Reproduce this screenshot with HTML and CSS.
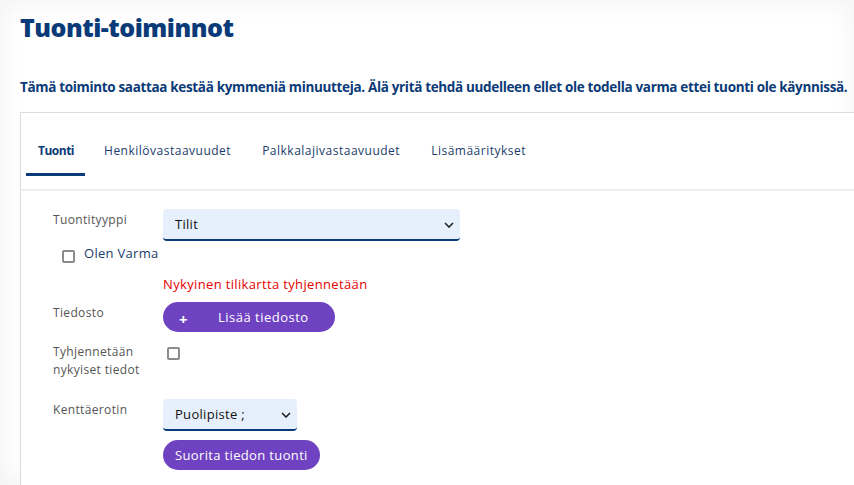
FILE: index.html
```html
<!DOCTYPE html>
<html lang="fi">
<head>
<meta charset="utf-8">
<title>Tuonti-toiminnot</title>
<link rel="stylesheet" href="styles.css">
</head>
<body>
<div class="page">
  <h1 class="title">Tuonti-toiminnot</h1>
  <p class="notice">Tämä toiminto saattaa kestää kymmeniä minuutteja. Älä yritä tehdä uudelleen ellet ole todella varma ettei tuonti ole käynnissä.</p>
  <div class="card">
    <nav class="tabs">
      <span class="tab active">Tuonti</span>
      <span class="tab">Henkilövastaavuudet</span>
      <span class="tab">Palkkalajivastaavuudet</span>
      <span class="tab">Lisämääritykset</span>
    </nav>
    <div class="form">
      <div class="row row-type">
        <label class="label">Tuontityyppi</label>
        <div class="select-wrap wide">
          <select class="select"><option>Tilit</option></select>
          <svg class="chev" width="10" height="6" viewBox="0 0 10 6"><path d="M1 1l4 4 4-4" fill="none" stroke="#222" stroke-width="1.6"/></svg>
        </div>
      </div>
      <div class="check-row">
        <span class="box"></span>
        <span class="check-text">Olen Varma</span>
      </div>
      <div class="row row-warn">
        <span></span>
        <span class="danger">Nykyinen tilikartta tyhjennetään</span>
      </div>
      <div class="row row-file">
        <label class="label">Tiedosto</label>
        <div><button class="btn btn-file"><span class="plus">+</span><span class="btn-text">Lisää tiedosto</span></button></div>
      </div>
      <div class="row row-clear">
        <label class="label two">Tyhjennetään<br>nykyiset tiedot</label>
        <div><span class="box box-inline"></span></div>
      </div>
      <div class="row row-sep">
        <label class="label">Kenttäerotin</label>
        <div class="select-wrap narrow">
          <select class="select"><option>Puolipiste ;</option></select>
          <svg class="chev" width="10" height="6" viewBox="0 0 10 6"><path d="M1 1l4 4 4-4" fill="none" stroke="#222" stroke-width="1.6"/></svg>
        </div>
      </div>
      <div class="row row-run">
        <span></span>
        <div><button class="btn btn-run">Suorita tiedon tuonti</button></div>
      </div>
    </div>
  </div>
</div>
</body>
</html>
```
FILE: styles.css
```css
html, body {
  margin: 0;
  height: 100%;
  overflow: hidden;
}
body {
  background: #fff;
  font-family: "Open Sans", "Noto Sans", sans-serif;
}
.page {
  height: 485px;
  overflow: hidden;
  box-sizing: border-box;
  padding: 9px 0 0 20px;
  box-shadow: inset 0 0 28px rgba(0, 0, 0, 0.06);
}
.title {
  margin: 0;
  font-size: 25px;
  line-height: 36px;
  font-weight: 800;
  letter-spacing: -0.5px;
  color: #0a3a78;
}
.notice {
  margin: 32px 0 0;
  font-size: 13.5px;
  line-height: 20px;
  font-weight: 700;
  letter-spacing: -0.34px;
  color: #0a3a78;
  white-space: nowrap;
}
.card {
  margin-top: 15px;
  border: 1px solid #dcdcdc;
  border-right: none;
  background: #fff;
  min-height: 400px;
}
.tabs {
  display: flex;
  padding: 29px 0 0 5px;
  border-bottom: 2px solid #eeeeee;
}
.tab {
  padding: 0 12px 13px;
  margin-right: 7px;
  font-size: 12px;
  line-height: 18px;
  letter-spacing: 0.5px;
  color: #1b3c6c;
  border-bottom: 3px solid transparent;
  margin-bottom: 13px;
}
.tab.active {
  padding: 0 11px 13px 12px;
  font-weight: 700;
  letter-spacing: -0.5px;
  color: #0a3a78;
  border-bottom-color: #0a3a78;
}
.form {
  padding: 18px 32px;
}
.row {
  display: grid;
  grid-template-columns: 110px auto;
  align-items: start;
}
.label {
  font-size: 12px;
  line-height: 18px;
  letter-spacing: 0.35px;
  color: #555;
  padding-top: 2px;
}
.label.two {
  padding-top: 0;
}
.select-wrap {
  position: relative;
}
.select-wrap.wide { width: 297px; }
.select-wrap.narrow { width: 134px; }
.select {
  -webkit-appearance: none;
  appearance: none;
  width: 100%;
  height: 32px;
  box-sizing: border-box;
  border: none;
  border-bottom: 2px solid #0a3a78;
  border-radius: 4px;
  background: #e6f0fc;
  padding: 0 12px;
  font-family: "Open Sans", sans-serif;
  font-size: 13px;
  letter-spacing: 0.3px;
  color: #111;
}
.chev {
  position: absolute;
  right: 6px;
  top: 13px;
}
.check-row {
  display: flex;
  align-items: flex-start;
  padding-left: 9px;
  margin-top: 3px;
  height: 28px;
}
.box {
  display: inline-block;
  width: 13px;
  height: 13px;
  box-sizing: border-box;
  border: 2px solid #8a8a8f;
  border-radius: 2px;
  margin-top: 6px;
  background: #fff;
}
.check-text {
  margin-left: 9px;
  font-size: 13px;
  line-height: 18px;
  letter-spacing: 0.3px;
  color: #1b3c6c;
}
.row-warn {
  margin-top: 3px;
}
.danger {
  font-size: 13px;
  line-height: 18px;
  letter-spacing: 0.35px;
  color: #e60000;
}
.row-file {
  margin-top: 9px;
}
.btn {
  border: none;
  background: #6f42c1;
  color: #fff;
  font-family: "Open Sans", sans-serif;
  font-size: 13px;
  letter-spacing: 0.35px;
  border-radius: 15px;
  height: 30px;
  cursor: pointer;
}
.btn-file {
  width: 172px;
  display: flex;
  align-items: center;
  padding: 0 0 0 16px;
}
.plus {
  font-weight: 700;
  font-size: 15px;
  margin-top: 3px;
}
.btn-text {
  margin-left: 30px;
  letter-spacing: 0.5px;
}
.btn-run {
  padding: 0 12px;
  height: 30px;
}
.row-clear {
  margin-top: 11px;
}
.box-inline {
  margin: 2px 0 0 4px;
}
.row-sep {
  margin-top: 20px;
}
.row-run {
  margin-top: 9px;
}
```
